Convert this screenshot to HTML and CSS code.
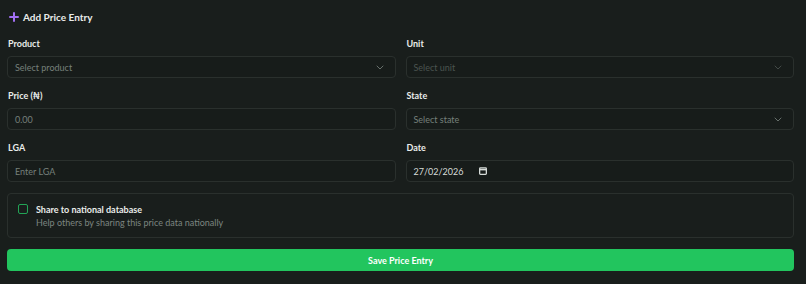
FILE: index.html
```html
<!DOCTYPE html>
<html>
<head>
<meta charset="utf-8">
<link rel="stylesheet" href="styles.css">
</head>
<body>
<div class="card">
  <div class="title">
    <svg class="plus" width="10" height="10" viewBox="0 0 10 10"><path d="M5 1v8M1 5h8" stroke="#a16ff2" stroke-width="2" stroke-linecap="round"/></svg>
    <span>Add Price Entry</span>
  </div>
  <div class="grid">
    <div class="field">
      <label class="label">Product</label>
      <div class="control">
        <span class="ph">Select product</span>
        <svg class="chev" width="8" height="5" viewBox="0 0 8 5"><path d="M1 1l3 3 3-3" fill="none" stroke="#67706c" stroke-width="1" stroke-linecap="round" stroke-linejoin="round"/></svg>
      </div>
    </div>
    <div class="field">
      <label class="label">Unit</label>
      <div class="control disabled">
        <span class="ph dim">Select unit</span>
        <svg class="chev" width="8" height="5" viewBox="0 0 8 5"><path d="M1 1l3 3 3-3" fill="none" stroke="#434a47" stroke-width="1" stroke-linecap="round" stroke-linejoin="round"/></svg>
      </div>
    </div>
    <div class="field">
      <label class="label">Price (₦)</label>
      <div class="control"><span class="ph">0.00</span></div>
    </div>
    <div class="field">
      <label class="label">State</label>
      <div class="control">
        <span class="ph">Select state</span>
        <svg class="chev" width="8" height="5" viewBox="0 0 8 5"><path d="M1 1l3 3 3-3" fill="none" stroke="#67706c" stroke-width="1" stroke-linecap="round" stroke-linejoin="round"/></svg>
      </div>
    </div>
    <div class="field">
      <label class="label">LGA</label>
      <div class="control"><span class="ph">Enter LGA</span></div>
    </div>
    <div class="field">
      <label class="label">Date</label>
      <div class="control date">
        <span class="val">27/02/2026</span>
        <svg class="cal" width="8" height="8" viewBox="0 0 8 8"><rect x="0.65" y="0.9" width="6.7" height="6.4" rx="0.8" fill="none" stroke="#d6dbd8" stroke-width="1.3"/><path d="M0.65 2.6h6.7" stroke="#d6dbd8" stroke-width="1.6"/></svg>
      </div>
    </div>
  </div>
  <div class="share">
    <span class="check"></span>
    <div class="share-text">
      <div class="share-title">Share to national database</div>
      <div class="share-sub">Help others by sharing this price data nationally</div>
    </div>
  </div>
  <button class="save">Save Price Entry</button>
</div>
</body>
</html>
```
FILE: styles.css
```css
html, body {
  margin: 0;
  padding: 0;
  background: #191e1c;
  font-family: Lato, "Noto Sans", sans-serif;
  color: #e9ecea;
}
.card {
  width: 787px;
  padding: 8px 0 0 7px;
  display: flex;
  flex-direction: column;
}
.title {
  display: flex;
  align-items: center;
  gap: 4px;
  height: 18px;
  padding-left: 2px;
  font-size: 10px;
  font-weight: 700;
}
.grid {
  margin-top: 11px;
  display: grid;
  grid-template-columns: 1fr 1fr;
  column-gap: 10px;
  row-gap: 11px;
}
.field {
  display: flex;
  flex-direction: column;
}
.label {
  font-size: 9px;
  font-weight: 700;
  line-height: 14px;
  height: 14px;
  padding-left: 1px;
  margin-bottom: 5px;
}
.control {
  height: 22px;
  box-sizing: border-box;
  border: 1px solid #2a302d;
  border-radius: 4px;
  background: #171c1a;
  display: flex;
  align-items: center;
  justify-content: space-between;
  padding: 0 11px 0 7px;
  font-size: 9px;
}
.ph { color: #76807b; }
.ph.dim { color: #4b5450; }
.chev { flex: none; }
.date { justify-content: flex-start; gap: 16px; }
.val { color: #d6dbd8; }
.share {
  margin-top: 11px;
  height: 45px;
  box-sizing: border-box;
  border: 1px solid #2a302d;
  border-radius: 4px;
  display: flex;
  align-items: flex-start;
  padding: 10px 0 0 10px;
  gap: 8px;
}
.check {
  width: 10px;
  height: 10px;
  box-sizing: border-box;
  border: 1px solid #22a456;
  border-radius: 2px;
  flex: none;
}
.share-text { display: flex; flex-direction: column; }
.share-title { font-size: 9px; font-weight: 700; line-height: 13px; margin-top: -1px; }
.share-sub { font-size: 9px; color: #7c8580; line-height: 13px; }
.save {
  margin-top: 11px;
  height: 22px;
  border: none;
  border-radius: 4px;
  background: #22c55e;
  color: #ffffff;
  font-family: inherit;
  font-size: 9px;
  font-weight: 700;
}
```
